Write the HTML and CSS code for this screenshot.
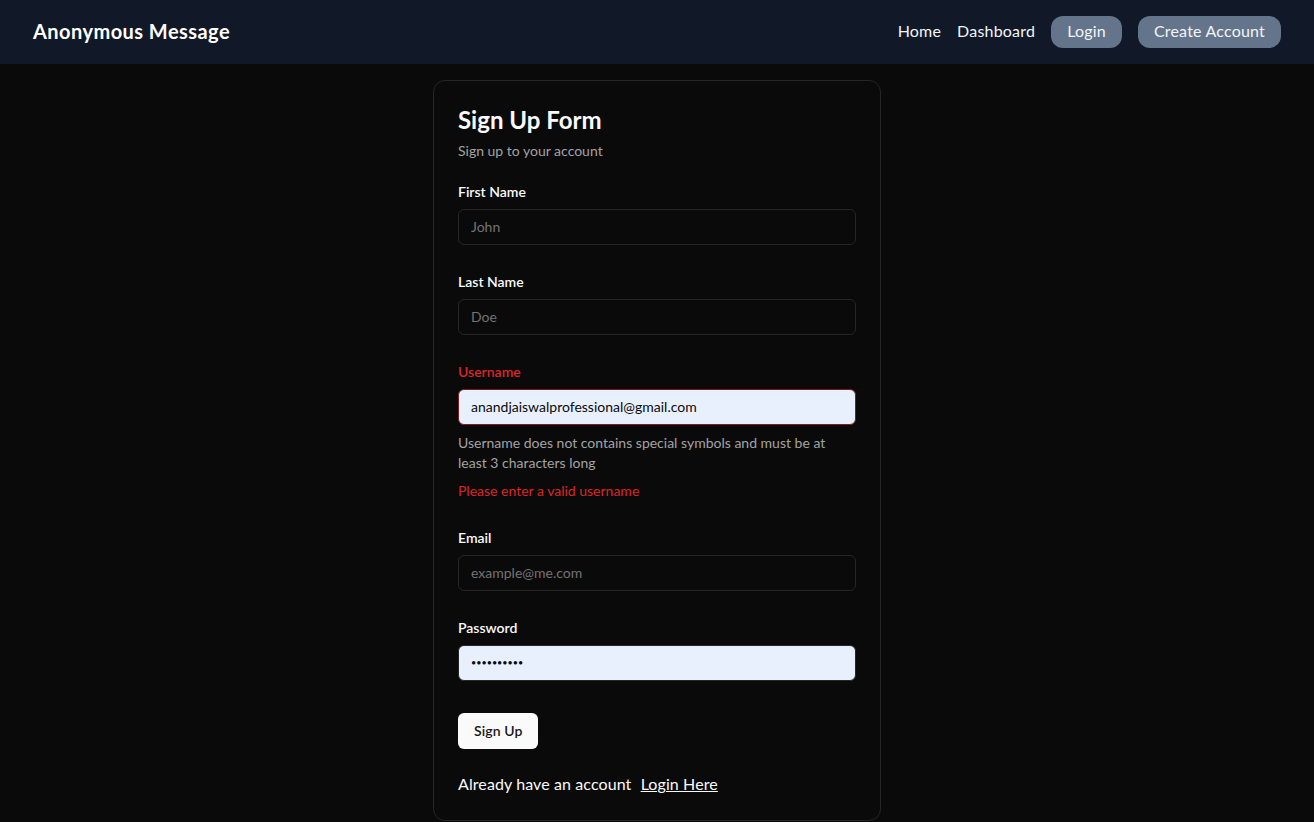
FILE: index.html
```html
<!DOCTYPE html>
<html lang="en">
<head>
<meta charset="utf-8">
<title>Anonymous Message</title>
<link rel="stylesheet" href="styles.css">
</head>
<body>
<nav class="nav">
  <div class="brand">Anonymous Message</div>
  <div class="nav-links">
    <a class="nav-link" href="#">Home</a>
    <a class="nav-link" href="#">Dashboard</a>
    <a class="nav-btn" href="#">Login</a>
    <a class="nav-btn" href="#">Create Account</a>
  </div>
</nav>
<main class="main">
  <section class="card">
    <h1 class="title">Sign Up Form</h1>
    <p class="subtitle">Sign up to your account</p>
    <form class="form">
      <div class="field">
        <label class="label">First Name</label>
        <input class="input" placeholder="John">
      </div>
      <div class="field">
        <label class="label">Last Name</label>
        <input class="input" placeholder="Doe">
      </div>
      <div class="field">
        <label class="label label-error">Username</label>
        <input class="input input-filled input-error" value="anandjaiswalprofessional@gmail.com">
        <p class="desc">Username does not contains special symbols and must be at least 3 characters long</p>
        <p class="error">Please enter a valid username</p>
      </div>
      <div class="field">
        <label class="label">Email</label>
        <input class="input" placeholder="example@me.com">
      </div>
      <div class="field">
        <label class="label">Password</label>
        <input class="input input-filled input-password" type="password" value="abcdefghij">
      </div>
      <button class="submit" type="button">Sign Up</button>
    </form>
    <p class="footer-text">Already have an account <a class="footer-link" href="#">Login Here</a></p>
  </section>
</main>
</body>
</html>
```
FILE: styles.css
```css
* { box-sizing: border-box; }
html, body { margin: 0; padding: 0; }
body {
  background: #0a0a0a;
  color: #fafafa;
  font-family: "Lato", "Noto Sans", sans-serif;
  min-height: 822px;
}
.nav {
  height: 64px;
  background: #111827;
  display: flex;
  align-items: center;
  justify-content: space-between;
  padding: 0 33px;
}
.brand {
  font-size: 20px;
  font-weight: 700;
  color: #ffffff;
  letter-spacing: 0.45px;
  padding-bottom: 2px;
}
.nav-links {
  display: flex;
  align-items: center;
  gap: 16px;
}
.nav-link {
  color: #f1f5f9;
  text-decoration: none;
  font-size: 16px;
  letter-spacing: 0.2px;
  padding-bottom: 3px;
}
.nav-btn {
  color: #f1f5f9;
  text-decoration: none;
  font-size: 16px;
  letter-spacing: 0.2px;
  background: #64748b;
  border-radius: 12px;
  height: 32px;
  line-height: 30px;
  padding: 0 16px 2px;
}
.main {
  display: flex;
  justify-content: center;
  padding-top: 16px;
}
.card {
  width: 448px;
  border: 1px solid #262626;
  border-radius: 12px;
  background: #0a0a0a;
  padding: 24px;
}
.title {
  margin: 0;
  font-size: 24px;
  line-height: 30px;
  font-weight: 700;
  color: #fafafa;
}
.subtitle {
  margin: 6px 0 0;
  font-size: 14px;
  line-height: 20px;
  color: #a3a3a3;
}
.form {
  margin-top: 26px;
  display: flex;
  flex-direction: column;
  gap: 32px;
  align-items: flex-start;
}
.field {
  width: 100%;
  display: flex;
  flex-direction: column;
  gap: 8px;
}
.label {
  font-size: 14px;
  line-height: 10px;
  margin-bottom: 4px;
  font-weight: 600;
  color: #fafafa;
}
.label-error { color: #dc2626; }
.input {
  width: 100%;
  height: 36px;
  border: 1px solid #262626;
  border-radius: 6px;
  background: transparent;
  color: #fafafa;
  font-family: inherit;
  font-size: 14px;
  padding: 0 12px 1px;
  outline: none;
}
.input::placeholder { color: #737373; }
.input-filled {
  background: #e8f0fe;
  color: #0a0a0a;
}
.input-error { border-color: #7f1d1d; }
.input-password {
  font-size: 9px;
  letter-spacing: 0;
}
.desc {
  margin: 0;
  font-size: 14px;
  line-height: 20px;
  color: #a3a3a3;
}
.error {
  margin: 0;
  font-size: 14px;
  line-height: 20px;
  color: #dc2626;
}
.submit {
  height: 36px;
  padding: 0 16px 2px;
  border: none;
  border-radius: 6px;
  background: #fafafa;
  color: #171717;
  font-family: inherit;
  font-size: 14px;
  font-weight: 600;
  letter-spacing: 0.1px;
}
.footer-text {
  margin: 23px 0 0;
  font-size: 16px;
  line-height: 24px;
  color: #fafafa;
  letter-spacing: 0.1px;
}
.footer-link {
  color: #fafafa;
  margin-left: 5px;
}
```
